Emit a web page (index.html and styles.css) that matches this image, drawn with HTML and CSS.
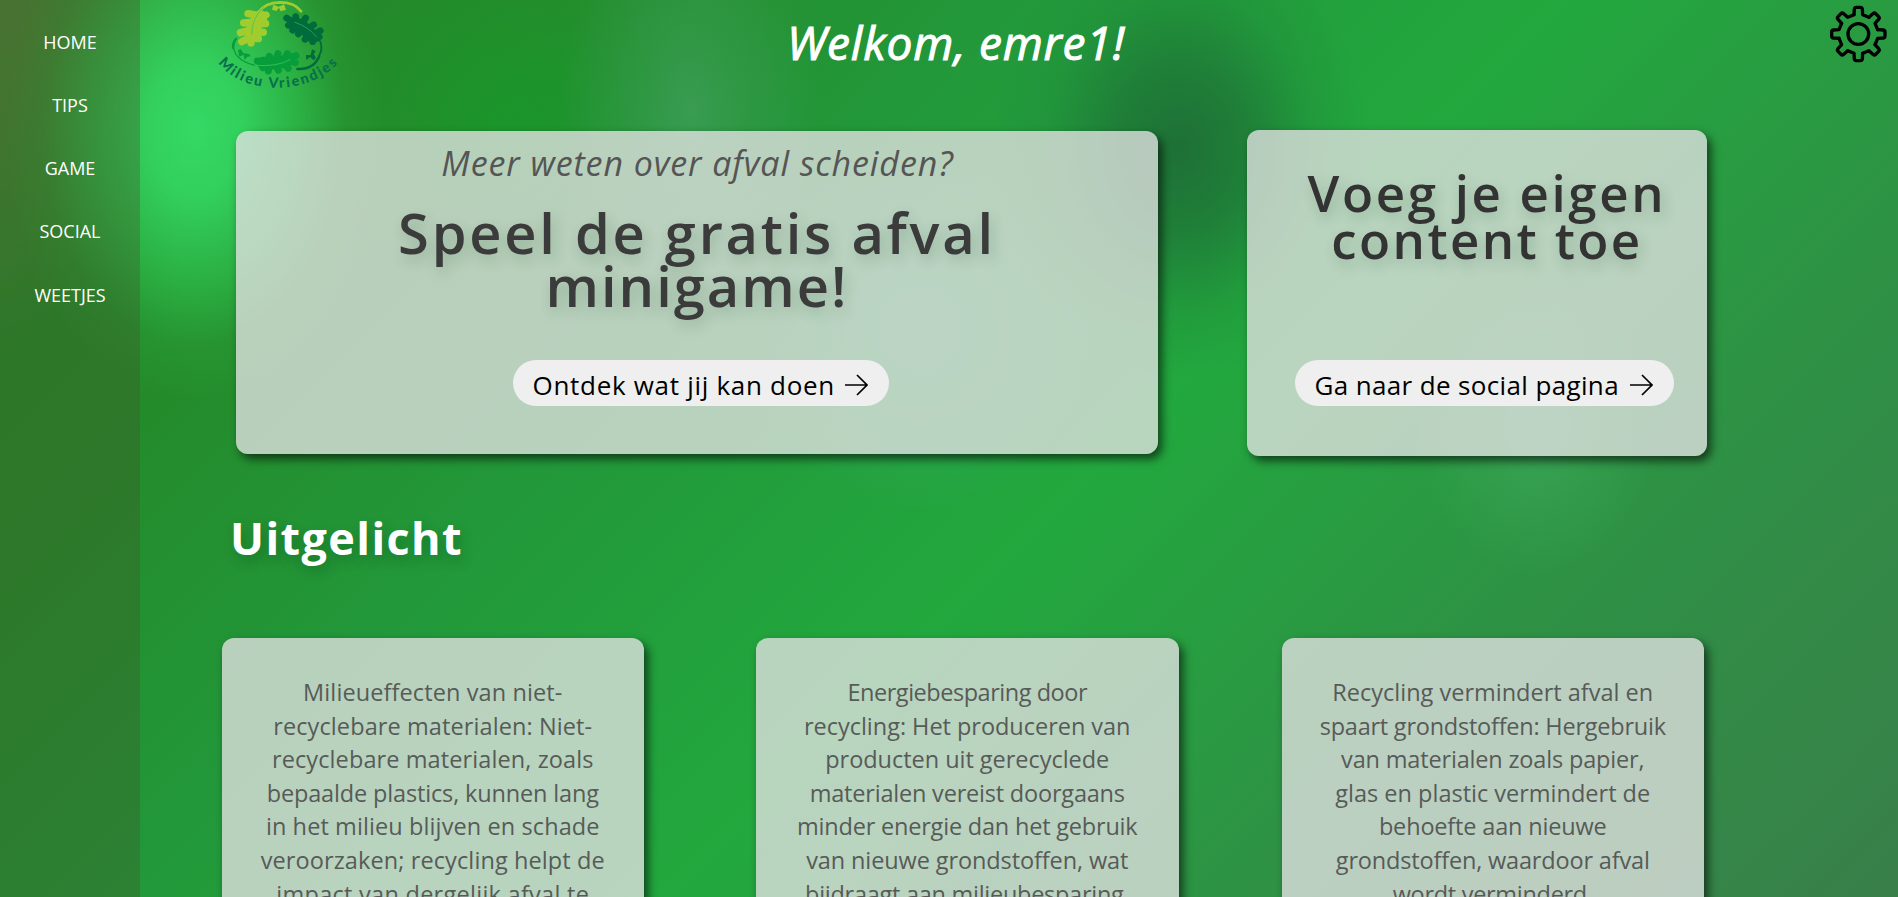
FILE: index.html
```html
<!DOCTYPE html>
<html lang="nl">
<head>
<meta charset="utf-8">
<title>Milieu Vriendjes</title>
<link rel="stylesheet" href="styles.css">
</head>
<body>
<nav class="sidebar">
<a>HOME</a><a>TIPS</a><a>GAME</a><a>SOCIAL</a><a>WEETJES</a>
</nav>
<main class="page">
<header class="top">
<svg class="logo" viewBox="0 0 480 300">
<defs><path id="arc" d="M55 188 C125 286 330 292 418 184"/></defs>
<g fill="none" stroke-linecap="round" stroke-linejoin="round">
<g stroke="#a0cd2d"><path stroke-width="42" d="M181 52Q160 76 155 104"/><path stroke-width="22" d="M185 48L144 41M172 65L131 69M162 88L121 98M158 108L125 125M153 112V129M190 50L198 45M178 72L197 71M168 94L190 97M160 114L175 116"/><path stroke-width="8" d="M174 38Q195 8 240 7Q285 7 303 34"/></g>
<path stroke="#5cc04a" stroke-width="3" d="M155 103Q155 54 190 23"/>
<g stroke="#006c3c"><path stroke-width="38" d="M283 70Q315 80 336 108"/><path stroke-width="20" d="M278 66L260 54M289 65L287 50M304 73L317 54M322 88L341 74M338 106L361 92M347 117L358 110M275 70L265 76M291 76L278 91M307 90L295 102M324 104L315 118M338 116L338 125"/><path stroke-width="5" d="M348 105Q375 137 358 166"/><path stroke-width="7" d="M358 168Q342 209 292 207"/></g>
<path stroke="#289c50" stroke-width="3" d="M285 67Q325 80 350 111"/>
<g stroke="#079d3a"><path stroke-width="36" d="M188 188Q230 196 270 178"/><path stroke-width="21" d="M184 185L172 183M202 184L208 169M226 182L234 161M253 178L262 161M274 174L288 167M185 193L189 203M207 194L205 213M226 192L235 211M247 186L265 205M270 180L286 188"/><path stroke-width="4" d="M108 116C91 146 104 182 165 196"/><path stroke-width="7" d="M108 116Q98 128 99 144"/></g>
<path stroke="#31bf58" stroke-width="3" d="M164 196Q234 201 270 179"/>
</g>
<path fill="#a0cd2d" d="M236 20L220 14L216 29L229 33L237 23L242 34L258 29L252 13Z"/>
<path fill="#079d3a" d="M130 160L122 147L114 151L118 170L131 164L134 179L142 170L152 169L147 162Z"/>
<path fill="#006c3c" d="M333 161L336 148L347 154L341 162L348 174L341 181L330 171L319 180L318 165L331 166Z"/>
<text class="logo-text"><textPath href="#arc" textLength="400">Milieu Vriendjes</textPath></text>
</svg>
<h1 class="welcome">Welkom, emre1!</h1>
<svg class="gear" viewBox="0 0 294 210">
<defs><path id="tooth" d="M-13 -58L-12 -75Q-11 -80 -6 -80H6Q11 -80 12 -75L13 -58L31.8 -50.2"/></defs>
<g transform="translate(175 102)" fill="none" stroke="#000" stroke-width="10" stroke-linecap="round" stroke-linejoin="round">
<circle r="31"/><use href="#tooth"/><use href="#tooth" transform="rotate(45)"/><use href="#tooth" transform="rotate(90)"/><use href="#tooth" transform="rotate(135)"/><use href="#tooth" transform="rotate(180)"/><use href="#tooth" transform="rotate(225)"/><use href="#tooth" transform="rotate(270)"/><use href="#tooth" transform="rotate(315)"/>
</g></svg>
</header>
<section class="heroes">
<article class="panel hero">
<p class="kicker">Meer weten over afval scheiden?</p>
<h2 class="hero-title">Speel de gratis afval<br><span class="tight">minigame!</span></h2>
<button class="pill pill-game"><span>Ontdek wat jij kan doen</span><svg class="arrow" viewBox="0 0 23 22"><path d="M0 11H22M12 1L22 11L12 21"/></svg></button>
</article>
<article class="panel promo">
<h2 class="promo-title">Voeg je eigen<br><span class="tight">content toe</span></h2>
<button class="pill pill-social"><span>Ga naar de social pagina</span><svg class="arrow" viewBox="0 0 23 22"><path d="M0 11H22M12 1L22 11L12 21"/></svg></button>
</article>
</section>
<h2 class="section-title">Uitgelicht</h2>
<section class="cards">
<article class="panel card materials"><p><span>Milieueffecten van niet-</span><br><span>recyclebare materialen: Niet-</span><br><span>recyclebare materialen, zoals</span><br><span>bepaalde plastics, kunnen lang</span><br><span>in het milieu blijven en schade</span><br><span>veroorzaken; recycling helpt de</span><br><span>impact van dergelijk afval te</span></p></article>
<article class="panel card energy"><p><span>Energiebesparing door</span><br><span>recycling: Het produceren van</span><br><span>producten uit gerecyclede</span><br><span>materialen vereist doorgaans</span><br><span>minder energie dan het gebruik</span><br><span>van nieuwe grondstoffen, wat</span><br><span>bijdraagt aan milieubesparing.</span></p></article>
<article class="panel card resources"><p><span>Recycling vermindert afval en</span><br><span>spaart grondstoffen: Hergebruik</span><br><span>van materialen zoals papier,</span><br><span>glas en plastic vermindert de</span><br><span>behoefte aan nieuwe</span><br><span>grondstoffen, waardoor afval</span><br><span>wordt verminderd.</span></p></article>
</section>
</main>
</body>
</html>
```
FILE: styles.css
```css
* { box-sizing: border-box; margin: 0; padding: 0; }

body {
  display: flex;
  height: 897px;
  overflow: hidden;
  font-family: "Open Sans", "Noto Sans", sans-serif;
  background:
    radial-gradient(ellipse 190px 270px at 195px 130px, #34d964 0, #34d763e6 25%, #30c853a0 55%, #2cae4040 80%, transparent 100%),
    radial-gradient(ellipse 130px 230px at 690px 110px, #3b9d55e6 0, #389c5088 40%, transparent 100%),
    radial-gradient(ellipse 190px 230px at 1180px 150px, #1e7036 0, #1e7637cc 35%, #1f863a55 70%, transparent 100%),
    radial-gradient(circle 170px at 510px 120px, #179a2ab0 0, transparent 100%),
    radial-gradient(ellipse 120px 150px at 1537px 425px, #3ba25c 0, #37a252b0 40%, transparent 100%),
    radial-gradient(circle 180px at 920px 330px, #37a869aa 0, transparent 100%),
    radial-gradient(ellipse 200px 330px at 0 0, #4f8237 0, transparent 100%),
    linear-gradient(135deg, #338a30 0, #24892a 14%, #248b2b 20%, #22983a 36%, #22a83e 56%, #2d9344 75%, #397f4a 100%);
}

.sidebar {
  flex: 0 0 140px;
  display: flex;
  flex-direction: column;
  align-items: center;
  padding-top: 10.5px;
  background: rgba(63, 86, 40, 0.35);
}
.sidebar a {
  height: 63.3px;
  line-height: 63.3px;
  font-size: 18px;
  color: #fff;
}

.page { flex: 1; min-width: 0; }

.top {
  display: grid;
  grid-template-columns: 220px 1192px 346px;
  height: 130px;
}
.logo { width: 160px; height: 100px; margin-left: 60px; }
.logo-text {
  font: 900 43px "Lato", sans-serif;
  fill: #08704a;
}
.welcome {
  padding-top: 10px;
  text-align: center;
  font-size: 46px;
  line-height: 64px;
  font-style: italic;
  font-weight: 500;
  letter-spacing: 0.8px;
  color: #fff;
  -webkit-text-stroke: 1px #fff;
}
.gear { width: 98px; height: 70px; justify-self: end; }

.panel {
  border-radius: 12px;
  background: rgba(227, 225, 227, 0.78);
  box-shadow: 4px 5px 10px rgba(0, 0, 0, 0.6);
  text-align: center;
}

.heroes { display: flex; padding-left: 95.5px; gap: 89px; }
.hero { width: 922px; height: 323px; margin-top: 1px; padding-top: 8px; }
.promo { width: 460px; height: 326px; padding: 39px 0 0 21px; }

.kicker {
  padding-left: 2px;
  font-size: 34px;
  line-height: 48px;
  letter-spacing: 0.9px;
  font-style: italic;
  color: #555;
}
.hero-title {
  margin-top: 19px;
  padding-left: 1px;
  font-size: 56px;
  line-height: 53px;
  letter-spacing: 2.75px;
  font-weight: 600;
  color: #3b3b3b;
  text-shadow: 3px 6px 14px rgba(0, 60, 20, 0.2);
}
.hero-title .tight { letter-spacing: 2px; }
.promo-title {
  font-size: 51px;
  line-height: 47px;
  letter-spacing: 2.65px;
  font-weight: 600;
  color: #333;
  text-shadow: 3px 6px 14px rgba(0, 60, 20, 0.2);
}
.promo-title .tight { letter-spacing: 2.4px; }
.pill {
  display: flex;
  align-items: center;
  height: 46px;
  padding: 4px 21px 0 20px;
  border: 0;
  border-radius: 23px;
  background: #efefef;
  color: #000;
  font-family: inherit;
  font-size: 26px;
  white-space: nowrap;
}
.pill-game { width: 376px; margin: 48px 0 0 277px; letter-spacing: 0.7px; }
.pill-social { width: 379px; margin: 97px 0 0 27px; letter-spacing: 0.36px; }
.arrow {
  width: 23px;
  height: 22px;
  margin-left: auto;
  fill: none;
  stroke: #000;
  stroke-width: 1.7;
}

.section-title {
  margin: 49px 0 0 90px;
  height: 67px;
  font-size: 45px;
  line-height: 65px;
  letter-spacing: 1.4px;
  font-weight: 700;
  color: #fff;
  text-shadow: 3px 6px 12px rgba(0, 60, 20, 0.3);
}

.cards {
  display: flex;
  padding-left: 81.5px;
  margin-top: 66px;
}
.card {
  flex: 0 0 422.5px;
  height: 420px;
  padding-top: 38px;
  font-size: 23.5px;
  line-height: 33.6px;
  color: #575b58;
  white-space: nowrap;
}
.energy { margin-left: 112px; }
.resources { margin-left: 103px; }

.materials span { letter-spacing: 0.1px; }
.materials span:nth-of-type(4) { letter-spacing: -0.15px; }
.materials span:nth-of-type(7) { letter-spacing: 0.27px; }
.energy span { letter-spacing: -0.03px; }
.energy span:nth-of-type(1) { letter-spacing: -0.47px; }
.energy span:nth-of-type(4),
.energy span:nth-of-type(5) { letter-spacing: -0.2px; }
.energy span:nth-of-type(6) { letter-spacing: -0.1px; }
.energy span:nth-of-type(7) { letter-spacing: -0.27px; }
.resources span { letter-spacing: -0.17px; }
.resources span:nth-of-type(1),
.resources span:nth-of-type(4) { letter-spacing: 0; }
.resources span:nth-of-type(2) { letter-spacing: -0.23px; }
.resources span:nth-of-type(7) { letter-spacing: -0.3px; }
```
